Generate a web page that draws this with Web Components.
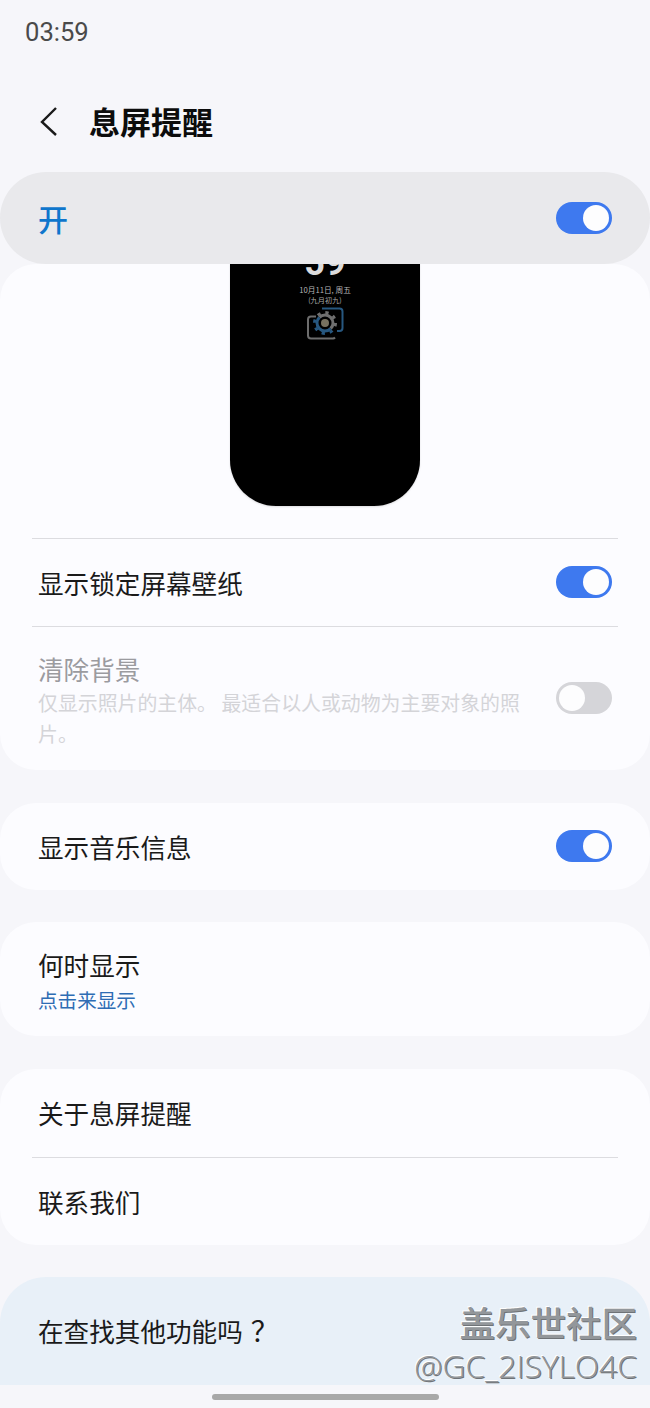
<!DOCTYPE html>
<html lang="zh">
<head>
<meta charset="utf-8">
<title>息屏提醒</title>
<style>
  html, body { margin: 0; padding: 0; }
  body {
    width: 650px; height: 1408px; overflow: hidden; position: relative;
    background: #f6f6fa; color: #111;
    font-family: "Noto Sans CJK SC", "Noto Sans", sans-serif;
  }
</style>
</head>
<body>
<aod-header></aod-header>
<aod-master>开</aod-master>

<aod-card>
  <aod-preview></aod-preview>
  <aod-row toggle="on" divider style="--row-h:88px;--pad-top:2px;--toggle-shift:-2px">显示锁定屏幕壁纸</aod-row>
  <aod-row toggle="off" disabled divider style="--row-h:144px;--pad-top:4px;--toggle-shift:-4px;--sub-lh:31px">清除背景
    <span slot="sub">仅显示照片的主体。 最适合以人或动物为主要对象的照片。</span>
  </aod-row>
</aod-card>

<aod-card style="--gap:33px">
  <aod-row toggle="on" style="--row-h:87px;--toggle-shift:-1px">显示音乐信息</aod-row>
</aod-card>

<aod-card style="--gap:32px">
  <aod-row link style="--row-h:114px;--pad-top:2px">何时显示
    <span slot="sub">点击来显示</span>
  </aod-row>
</aod-card>

<aod-card style="--gap:33px">
  <aod-row style="--row-h:88px">关于息屏提醒</aod-row>
  <aod-row divider style="--row-h:88px;--pad-top:2px">联系我们</aod-row>
</aod-card>

<aod-card style="--gap:32px;--card-bg:#e8f0f8;--card-radius:46px 46px 0 0">
  <aod-row style="--row-h:108px">在查找其他功能吗<span style="padding-left:8px;font-size:28px;line-height:1">&#xFF1F;</span></aod-row>
</aod-card>

<aod-navbar></aod-navbar>
<aod-watermark></aod-watermark>

<script>
class AodHeader extends HTMLElement {
  constructor() {
    super();
    this.attachShadow({ mode: 'open' });
    this.shadowRoot.innerHTML = `
      <style>
        :host { display: block; height: 172px; }
        .status {
          height: 64px; box-sizing: border-box; padding: 17px 0 0 25px;
          font: 400 25.6px/30px Roboto, sans-serif; color: #4a4a4a;
        }
        .bar { display: flex; align-items: center; height: 114px; }
        svg { margin-left: 38px; width: 24px; height: 34px; display: block; }
        h1 {
          margin: 0 0 0 27px; font-size: 31px; font-weight: 700; line-height: 40px; color: #0c0c0c;
        }
      </style>
      <div class="status">03:59</div>
      <div class="bar">
        <svg viewBox="0 0 24 34" fill="none" stroke="#1a1a1a" stroke-width="2.4">
          <path d="M18 4 4 18l14 13"/>
        </svg>
        <h1>息屏提醒</h1>
      </div>`;
  }
}

class AodToggle extends HTMLElement {
  constructor() {
    super();
    this.attachShadow({ mode: 'open' });
    this.shadowRoot.innerHTML = `
      <style>
        :host { display: block; flex: none; width: 56px; height: 32px; }
        .track {
          display: flex; align-items: center; justify-content: flex-end;
          height: 100%; box-sizing: border-box; padding: 0 3px;
          border-radius: 16px; background: #3e79ef;
        }
        :host([off]) .track { background: #d5d5d9; justify-content: flex-start; }
        .knob { width: 26px; height: 26px; border-radius: 50%; background: #fdfdfe; }
      </style>
      <div class="track"><div class="knob"></div></div>`;
  }
}

class AodMaster extends HTMLElement {
  constructor() {
    super();
    this.attachShadow({ mode: 'open' });
    this.shadowRoot.innerHTML = `
      <style>
        :host {
          display: flex; align-items: center; justify-content: space-between;
          position: relative; z-index: 2;
          height: 92px; box-sizing: border-box; padding: 0 38px 0 38px;
          background: #e9e9ec; border-radius: 46px;
        }
        .label { font-size: 30px; font-weight: 500; color: #0f76cc; line-height: 40px; }
        aod-toggle { margin-top: -1px; }
      </style>
      <span class="label"><slot></slot></span>
      <aod-toggle></aod-toggle>`;
  }
}

class AodCard extends HTMLElement {
  constructor() {
    super();
    this.attachShadow({ mode: 'open' });
    this.shadowRoot.innerHTML = `
      <style>
        :host {
          display: block; overflow: hidden;
          margin-top: var(--gap, 0);
          background: var(--card-bg, #fcfcff);
          border-radius: var(--card-radius, 36px);
        }
      </style>
      <slot></slot>`;
  }
}

class AodPreview extends HTMLElement {
  constructor() {
    super();
    this.attachShadow({ mode: 'open' });
    this.shadowRoot.innerHTML = `
      <style>
        :host { display: block; height: 275px; margin-top: -1px; }
        .phone {
          width: 190px; height: 243px; margin: 0 auto; overflow: hidden;
          background: #000; border-radius: 0 0 46px 46px;
          display: flex; flex-direction: column; align-items: center;
          box-shadow: 0 1px 2px rgba(0,0,0,.12);
        }
        .clock {
          height: 13px; flex: none; overflow: hidden;
          display: flex; align-items: flex-end;
          font: 700 36px/26px Roboto, sans-serif; color: #dcdcdc;
        }
        .date { margin-top: 8px; font-size: 7.7px; line-height: 11px; color: #b5b5b5; white-space: nowrap; }
        .lunar { margin-top: 0; font-size: 7.2px; line-height: 11px; color: #a8a8a8; white-space: nowrap; }
        svg { display: block; width: 37px; height: 33px; margin-top: 1px; }
      </style>
      <div class="phone">
        <div class="clock">59</div>
        <div class="date">10月11日, 周五</div>
        <div class="lunar">(九月初九)</div>
        <svg viewBox="0 0 37 33" fill="none">
          <defs>
            <clipPath id="gear-up"><path d="M2 0H37V33H35Z"/></clipPath>
            <clipPath id="gear-down"><path d="M0 0H2L35 33H0Z"/></clipPath>
          </defs>
          <path d="M15 1.500H32.500a3 3 0 0 1 3 3V21a3 3 0 0 1-3 3H30" stroke="#27577f" stroke-width="2"/>
          <path d="M9 9.500H4a3 3 0 0 0-3 3V28.500a3 3 0 0 0 3 3H26a3 3 0 0 0 2-1" stroke="#6d6d6d" stroke-width="2"/>
          <g clip-path="url(#gear-up)" stroke="#6f6f6f">
            <circle cx="18" cy="16" r="8" stroke-width="3"/>
            <circle cx="18" cy="16" r="10.500" stroke-width="3" stroke-dasharray="3.300 4.950"/>
          </g>
          <g clip-path="url(#gear-down)" stroke="#27577f">
            <circle cx="18" cy="16" r="8" stroke-width="3"/>
            <circle cx="18" cy="16" r="10.500" stroke-width="3" stroke-dasharray="3.300 4.950"/>
          </g>
          <circle cx="18" cy="16" r="4" fill="#77715f"/>
        </svg>
      </div>`;
  }
}

class AodRow extends HTMLElement {
  constructor() {
    super();
    this.attachShadow({ mode: 'open' });
    this.shadowRoot.innerHTML = `
      <style>
        :host { display: block; position: relative; }
        .row {
          display: flex; align-items: center; justify-content: space-between; gap: 30px;
          height: var(--row-h, 88px); box-sizing: border-box;
          padding: var(--pad-top, 0) 38px 0;
        }
        .text { flex: 1; min-width: 0; }
        .title { font-size: 25.6px; line-height: 36px; color: #1a1a1a; }
        .sub { display: none; font-size: 19.9px; line-height: var(--sub-lh, 30px); color: #d4d4d8; }
        :host([has-sub]) .sub { display: block; }
        :host([disabled]) .title { color: #9b9b9f; }
        :host([link]) .sub { color: #2e6cb4; line-height: 27px; margin-top: 3px; font-size: 19.6px; }
        :host([divider])::before {
          content: ""; position: absolute; top: 0; left: 32px; right: 32px;
          height: 1px; background: #dcdce0;
        }
        aod-toggle { display: none; }
        :host([toggle]) aod-toggle { display: block; margin-top: var(--toggle-shift, 0); }
      </style>
      <div class="row">
        <div class="text">
          <div class="title"><slot></slot></div>
          <div class="sub"><slot name="sub"></slot></div>
        </div>
        <aod-toggle></aod-toggle>
      </div>`;
  }
  connectedCallback() {
    if (this.getAttribute('toggle') === 'off') {
      this.shadowRoot.querySelector('aod-toggle').setAttribute('off', '');
    }
    if (this.querySelector('[slot="sub"]')) this.setAttribute('has-sub', '');
  }
}

class AodNavbar extends HTMLElement {
  constructor() {
    super();
    this.attachShadow({ mode: 'open' });
    this.shadowRoot.innerHTML = `
      <style>
        :host {
          display: flex; justify-content: center; align-items: center;
          height: 23px; background: #f6f6fa;
        }
        .pill { width: 227px; height: 6px; border-radius: 3px; background: #a8a8a8; }
      </style>
      <div class="pill"></div>`;
  }
}

class AodWatermark extends HTMLElement {
  constructor() {
    super();
    this.attachShadow({ mode: 'open' });
    this.shadowRoot.innerHTML = `
      <style>
        :host {
          position: absolute; right: 13px; top: 1297px;
          display: flex; flex-direction: column; align-items: flex-end;
          color: #93979b; text-shadow: 1px 1px 0 #6f7377, -1px -1px 0 #fff;
        }
        .name { font-size: 35.500px; font-weight: 500; line-height: 49px; }
        .id { font: 300 31.800px/40px "Open Sans", sans-serif; }
      </style>
      <div class="name">盖乐世社区</div>
      <div class="id">@GC_2ISYLO4C</div>`;
  }
}

customElements.define('aod-toggle', AodToggle);
customElements.define('aod-header', AodHeader);
customElements.define('aod-master', AodMaster);
customElements.define('aod-card', AodCard);
customElements.define('aod-preview', AodPreview);
customElements.define('aod-row', AodRow);
customElements.define('aod-navbar', AodNavbar);
customElements.define('aod-watermark', AodWatermark);
</script>
</body>
</html>
